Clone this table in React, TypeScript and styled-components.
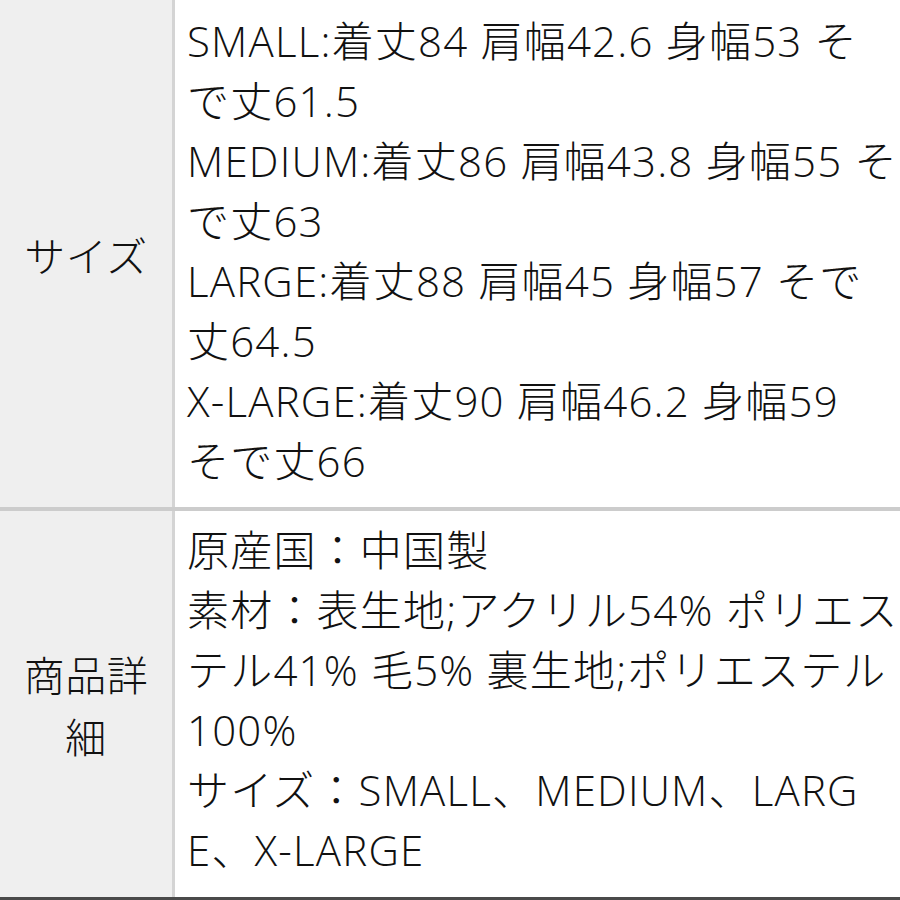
import styled, { createGlobalStyle } from 'styled-components';

const GlobalStyle = createGlobalStyle`
  html, body {
    margin: 0;
    padding: 0;
    background: #ffffff;
  }
  body {
    font-family: "Open Sans", "Noto Sans CJK JP", sans-serif;
    color: #111111;
  }
`;

const SpecTable = styled.div`
  width: 900px;
  display: flex;
  flex-direction: column;
  border-bottom: 3px solid #4a4a4a;
`;

const SpecRow = styled.div<{ $first?: boolean }>`
  display: grid;
  grid-template-columns: 175px 1fr;
  border-top: ${(p) => (p.$first ? 'none' : '4px solid #cccccc')};
`;

const Label = styled.div`
  background: #efefef;
  border-right: 3px solid #d4d4d4;
  display: flex;
  align-items: center;
  justify-content: center;
  text-align: center;
  padding: 0 14px;
  font-family: "Noto Sans CJK JP", sans-serif;
  font-size: 41px;
  font-weight: 300;
  line-height: 62px;
  letter-spacing: 0.5px;
`;

const Value = styled.div<{ $top: number; $bottom: number }>`
  padding: ${(p) => p.$top}px 0 ${(p) => p.$bottom}px 12px;
  font-size: 42px;
  font-weight: 300;
  letter-spacing: 1.2px;
  line-height: 60px;
  overflow: hidden;
`;

const Line = styled.span`
  display: block;
  white-space: nowrap;
`;

const sizeLines = [
  'SMALL:着丈84 肩幅42.6 身幅53 そ',
  'で丈61.5',
  'MEDIUM:着丈86 肩幅43.8 身幅55 そ',
  'で丈63',
  'LARGE:着丈88 肩幅45 身幅57 そで',
  '丈64.5',
  'X-LARGE:着丈90 肩幅46.2 身幅59',
  'そで丈66',
];

const detailLines = [
  '原産国：中国製',
  '素材：表生地;アクリル54% ポリエス',
  'テル41% 毛5% 裏生地;ポリエステル',
  '100%',
  'サイズ：SMALL、MEDIUM、LARG',
  'E、X-LARGE',
];

const App = () => {
  return (
    <>
      <GlobalStyle />
      <SpecTable>
        <SpecRow $first>
          <Label>サイズ</Label>
          <Value $top={11} $bottom={16}>
            {sizeLines.map((l) => (
              <Line key={l}>{l}</Line>
            ))}
          </Value>
        </SpecRow>
        <SpecRow>
          <Label>商品詳<br />細</Label>
          <Value $top={9} $bottom={17}>
            {detailLines.map((l) => (
              <Line key={l}>{l}</Line>
            ))}
          </Value>
        </SpecRow>
      </SpecTable>
    </>
  );
};

export default App;
